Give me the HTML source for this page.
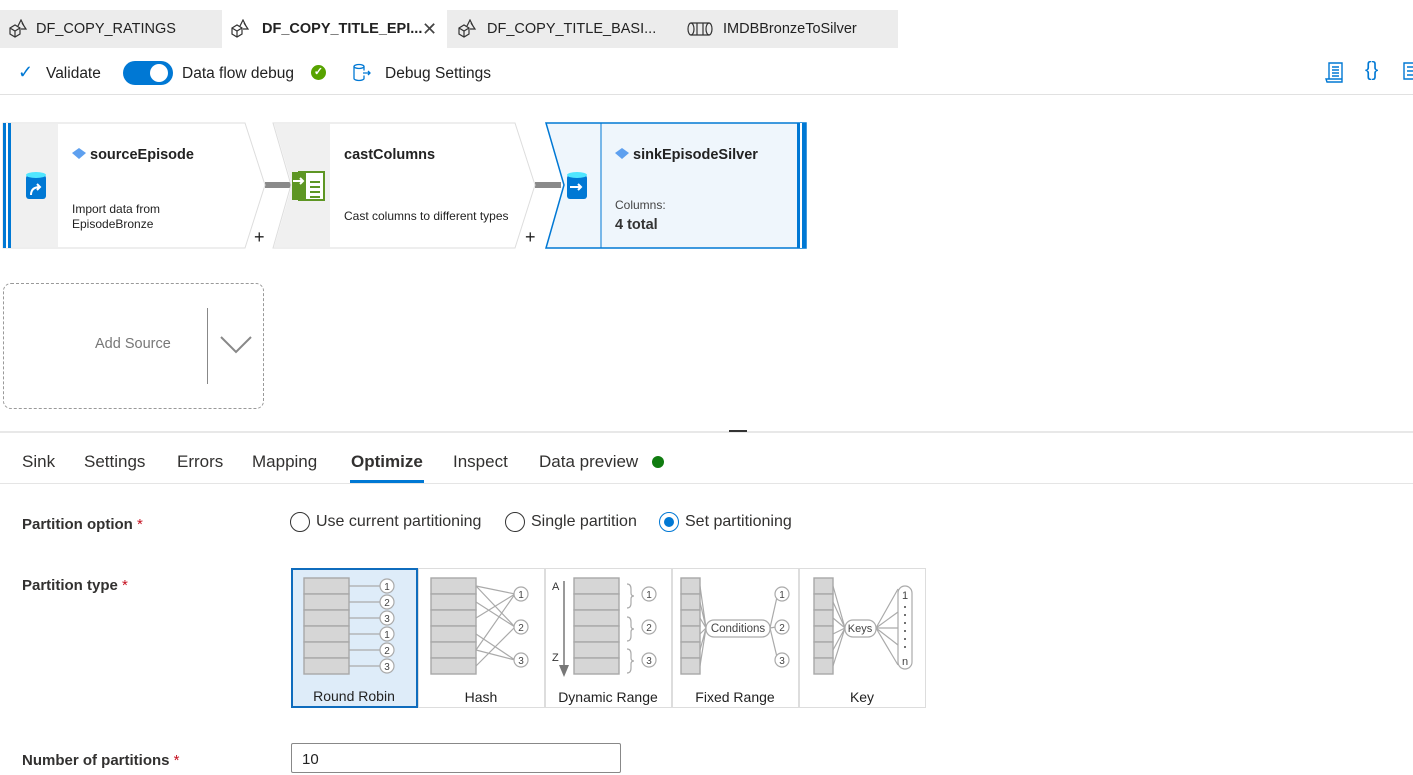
<!DOCTYPE html>
<html><head><meta charset="utf-8"><style>
*{box-sizing:border-box;margin:0;padding:0}
body{width:1413px;height:775px;overflow:hidden;background:#fff;font-family:"Liberation Sans",sans-serif;color:#222;position:relative}
.abs{position:absolute}
.tab{position:absolute;top:10px;height:38px;background:#ececec;font-size:14.5px;display:flex;align-items:center;color:#222}
.lbl{position:absolute;font-size:15px;font-weight:bold;color:#323130}
.req{color:#c50f1f;font-weight:normal}
.bt{position:absolute;top:452px;font-size:17px;color:#323130}
.radio{position:absolute;top:512px;font-size:16px;color:#323130;display:flex;align-items:center}
.rc{width:20px;height:20px;border:1px solid #333;border-radius:50%;margin-right:6px;display:inline-block}
</style></head><body>
<div class="abs" style="left:0;top:10px;width:1413px;height:38px;background:#fff"></div>
<div class="tab" style="left:0;width:222px;padding-left:8px"><svg width="22" height="20" viewBox="0 0 22 20" fill="none" stroke="#333" stroke-width="1.2"><path d="M2 9l5-3 5 3v6l-5 3-5-3z M2 9l5 3 5-3 M7 12v6 M10 7l3-6 3 6 M14 4l4 6h-5"/></svg><span style="margin-left:6px">DF_COPY_RATINGS</span></div>
<div class="tab" style="left:222px;width:225px;padding-left:8px;background:#fff;font-weight:bold"><svg width="22" height="20" viewBox="0 0 22 20" fill="none" stroke="#333" stroke-width="1.2"><path d="M2 9l5-3 5 3v6l-5 3-5-3z M2 9l5 3 5-3 M7 12v6 M10 7l3-6 3 6 M14 4l4 6h-5"/></svg><span style="margin-left:10px">DF_COPY_TITLE_EPI...</span><span style="position:absolute;left:200px;font-weight:normal;font-size:18px;color:#444">✕</span></div>
<div class="tab" style="left:447px;width:226px;padding-left:10px"><svg width="22" height="20" viewBox="0 0 22 20" fill="none" stroke="#333" stroke-width="1.2"><path d="M2 9l5-3 5 3v6l-5 3-5-3z M2 9l5 3 5-3 M7 12v6 M10 7l3-6 3 6 M14 4l4 6h-5"/></svg><span style="margin-left:8px">DF_COPY_TITLE_BASI...</span></div>
<div class="tab" style="left:673px;width:225px;padding-left:14px"><svg width="26" height="16" viewBox="0 0 26 16" fill="none" stroke="#333" stroke-width="1.2"><ellipse cx="4" cy="8" rx="3" ry="6"/><ellipse cx="22" cy="8" rx="3" ry="6"/><path d="M4 2h18M4 14h18M10 2v12M16 2v12"/></svg><span style="margin-left:10px">IMDBBronzeToSilver</span></div>
<div class="abs" style="left:0;top:94px;width:1413px;height:1px;background:#e1e1e1"></div>
<div class="abs" style="left:18px;top:62px;font-size:18px;color:#0078d4">✓</div>
<div class="abs" style="left:46px;top:65px;font-size:15.5px">Validate</div>
<div class="abs" style="left:123px;top:61px;width:50px;height:24px;border-radius:12px;background:#0078d4"><div style="position:absolute;right:5px;top:3px;width:18px;height:18px;border-radius:50%;background:#fff"></div></div>
<div class="abs" style="left:182px;top:65px;font-size:15.5px">Data flow debug</div>
<div class="abs" style="left:311px;top:65px;width:15px;height:15px;border-radius:50%;background:#57a300;color:#fff;font-size:11px;text-align:center;line-height:15px;font-weight:bold">✓</div>
<svg class="abs" style="left:352px;top:63px" width="22" height="20" viewBox="0 0 22 20" fill="none" stroke="#0078d4" stroke-width="1.3"><ellipse cx="7" cy="3.5" rx="5" ry="2"/><path d="M2 3.5v12c0 1 2.2 2 5 2s5-1 5-2v-3M12 3.5v4M11 10h7m-2-2l2 2-2 2"/></svg>
<div class="abs" style="left:385px;top:65px;font-size:15.5px">Debug Settings</div>
<svg class="abs" style="left:1325px;top:61px" width="20" height="22" viewBox="0 0 20 22" fill="none" stroke="#0078d4" stroke-width="1.4"><path d="M4 2h13v16H4zM1 18h16v3H2zM7 6h7M7 9h7M7 12h7M7 15h7"/></svg>
<div class="abs" style="left:1365px;top:59px;font-size:20px;color:#0078d4">{}</div>
<svg class="abs" style="left:1403px;top:62px" width="12" height="20" viewBox="0 0 12 20" fill="none" stroke="#0078d4" stroke-width="1.4"><path d="M1 1h12v16H1zM4 5h8M4 9h8M4 13h8"/></svg>

<svg class="abs" style="left:0;top:115px" width="820" height="140" viewBox="0 115 820 140">
<rect x="265" y="182" width="26" height="6" fill="#8a8a8a"/><rect x="535" y="182" width="26" height="6" fill="#8a8a8a"/>
<path d="M3 123H245L265 185L245 248H3Z" fill="#fff" stroke="#ddd"/>
<rect x="3" y="123" width="8" height="125" fill="#0078d4"/><rect x="6" y="123" width="2" height="125" fill="#fff"/>
<rect x="11" y="124" width="47" height="123" fill="#f0f0f0"/>
<path d="M273 123H515L535 185L515 248H273L291 185Z" fill="#fff" stroke="#ddd"/>
<path d="M274 124H330V247H274L292 185Z" fill="#f0f0f0"/>
<path d="M546 123H806V248H546L564 185Z" fill="#eff6fc" stroke="#0078d4" stroke-width="1.5"/>
<line x1="601" y1="123" x2="601" y2="248" stroke="#0078d4"/>
<rect x="797" y="123" width="9" height="125" fill="#0078d4"/><rect x="800" y="123" width="2" height="125" fill="#fff"/>
<g><rect x="26" y="175" width="20" height="24" rx="3" fill="#0078d4"/><ellipse cx="36" cy="175" rx="10" ry="3" fill="#50e6ff"/><path d="M31 195c0-6 4-8 9-8m-3-3l3 3-3 3" stroke="#fff" stroke-width="2" fill="none"/></g>
<g><rect x="567" y="175" width="20" height="24" rx="3" fill="#0078d4"/><ellipse cx="577" cy="175" rx="10" ry="3" fill="#50e6ff"/><path d="M570 187h11m-3-3l3 3-3 3" stroke="#fff" stroke-width="2" fill="none"/></g>
<g><rect x="299" y="172" width="25" height="28" fill="#fff" stroke="#5e9624" stroke-width="2"/><rect x="292" y="172" width="14" height="28" fill="#5e9624"/><path d="M293 181h10m-3-3l3 3-3 3" stroke="#fff" stroke-width="2" fill="none"/><path d="M310 182h10M310 187h10M310 192h10M310 197h10" stroke="#5e9624" stroke-width="2"/></g>
<path d="M72 153l7-5 7 5-7 6z" fill="#5ea0ef"/><path d="M615 153l7-5 7 5-7 6z" fill="#5ea0ef"/>
<g font-family="Liberation Sans,sans-serif" fill="#222">
<text x="90" y="159" font-size="14.5" font-weight="bold">sourceEpisode</text>
<text x="72" y="213" font-size="12">Import data from</text><text x="72" y="228" font-size="12">EpisodeBronze</text>
<text x="344" y="159" font-size="14.5" font-weight="bold">castColumns</text>
<text x="344" y="220" font-size="12">Cast columns to different types</text>
<text x="633" y="159" font-size="14.5" font-weight="bold">sinkEpisodeSilver</text>
<text x="615" y="209" font-size="12" fill="#444">Columns:</text>
<text x="615" y="229" font-size="14.5" font-weight="bold" fill="#333">4 total</text>
<text x="254" y="243" font-size="18">+</text><text x="525" y="243" font-size="18">+</text>
</g></svg>

<div class="abs" style="left:3px;top:283px;width:261px;height:126px;border:1px dashed #999;border-radius:8px"></div>
<div class="abs" style="left:95px;top:336px;font-size:14.5px;color:#777">Add Source</div>
<div class="abs" style="left:207px;top:308px;width:1px;height:76px;background:#888"></div>
<svg class="abs" style="left:220px;top:335px" width="33" height="20"><path d="M1 2l15 15 15-15" stroke="#888" stroke-width="2" fill="none"/></svg>

<div class="abs" style="left:0;top:431px;width:1413px;height:2px;background:#e8e8e8"></div>
<div class="abs" style="left:729px;top:430px;width:18px;height:2px;background:#333"></div>
<div class="bt" style="left:22px">Sink</div><div class="bt" style="left:84px">Settings</div><div class="bt" style="left:177px">Errors</div><div class="bt" style="left:252px">Mapping</div>
<div class="bt" style="left:351px;font-weight:bold">Optimize</div><div class="bt" style="left:453px">Inspect</div><div class="bt" style="left:539px">Data preview</div>
<div class="abs" style="left:652px;top:456px;width:12px;height:12px;border-radius:50%;background:#107c10"></div>
<div class="abs" style="left:350px;top:480px;width:74px;height:3px;background:#0078d4"></div>
<div class="abs" style="left:0;top:483px;width:1413px;height:1px;background:#e5e5e5"></div>

<div class="lbl" style="left:22px;top:516px">Partition option <span class="req">*</span></div>
<div class="lbl" style="left:22px;top:577px">Partition type <span class="req">*</span></div>
<div class="lbl" style="left:22px;top:752px">Number of partitions <span class="req">*</span></div>
<div class="radio" style="left:290px"><span class="rc"></span>Use current partitioning</div>
<div class="radio" style="left:505px"><span class="rc"></span>Single partition</div>
<div class="radio" style="left:659px"><span class="rc" style="border-color:#0078d4;position:relative"><span style="position:absolute;left:4px;top:4px;width:10px;height:10px;border-radius:50%;background:#0078d4"></span></span>Set partitioning</div>
<div class="abs" style="left:291px;top:743px;width:330px;height:30px;border:1px solid #888;border-radius:2px;font-size:15px;padding:7px 10px">10</div>

<svg class="abs" style="left:290px;top:567px" width="640" height="142" viewBox="0 0 640 142" font-family="Liberation Sans,sans-serif">
<g fill="none" stroke="#ddd"><rect x="128.5" y="1.5" width="126" height="139"/><rect x="255.5" y="1.5" width="126" height="139"/><rect x="382.5" y="1.5" width="126" height="139"/><rect x="509.5" y="1.5" width="126" height="139"/></g>
<rect x="2" y="2" width="125" height="138" fill="#deecf9" stroke="#0f6cbd" stroke-width="2"/>
<defs><g id="stack"><rect x="0" y="0" width="45" height="16" fill="#d6d6d6" stroke="#a8a8a8" stroke-width="1.4"/><rect x="0" y="16" width="45" height="16" fill="#d6d6d6" stroke="#a8a8a8" stroke-width="1.4"/><rect x="0" y="32" width="45" height="16" fill="#d6d6d6" stroke="#a8a8a8" stroke-width="1.4"/><rect x="0" y="48" width="45" height="16" fill="#d6d6d6" stroke="#a8a8a8" stroke-width="1.4"/><rect x="0" y="64" width="45" height="16" fill="#d6d6d6" stroke="#a8a8a8" stroke-width="1.4"/><rect x="0" y="80" width="45" height="16" fill="#d6d6d6" stroke="#a8a8a8" stroke-width="1.4"/></g>
<g id="nstack"><rect x="0" y="0" width="19" height="16" fill="#d6d6d6" stroke="#a8a8a8" stroke-width="1.4"/><rect x="0" y="16" width="19" height="16" fill="#d6d6d6" stroke="#a8a8a8" stroke-width="1.4"/><rect x="0" y="32" width="19" height="16" fill="#d6d6d6" stroke="#a8a8a8" stroke-width="1.4"/><rect x="0" y="48" width="19" height="16" fill="#d6d6d6" stroke="#a8a8a8" stroke-width="1.4"/><rect x="0" y="64" width="19" height="16" fill="#d6d6d6" stroke="#a8a8a8" stroke-width="1.4"/><rect x="0" y="80" width="19" height="16" fill="#d6d6d6" stroke="#a8a8a8" stroke-width="1.4"/></g></defs>
<g stroke="#aaa" stroke-width="1.2" fill="none">
<path d="M59 19H91M59 35H91M59 51H91M59 67H91M59 83H91M59 99H91"/>
<path d="M186 19L225 27M186 35L225 60M186 51L225 27M186 67L225 93M186 83L225 27M186 99L225 60M186 19L225 60M186 83L225 93"/>
<path d="M410 19L416 61M410 35L416 61M410 51L416 61M410 67L416 61M410 83L416 61M410 99L416 61M480 61L487 30M480 61L486 60M480 61L487 90"/>
<path d="M543 19L555 61M543 35L555 61M543 51L555 61M543 67L555 61M543 83L555 61M543 99L555 61M586 61L608 22M586 61L608 45M586 61L608 61M586 61L608 78M586 61L608 98"/>
<path d="M337 17q4 0 4 5v4q0 3 3 3q-3 0-3 3v4q0 5-4 5M337 50q4 0 4 5v4q0 3 3 3q-3 0-3 3v4q0 5-4 5M337 82q4 0 4 5v4q0 3 3 3q-3 0-3 3v4q0 5-4 5"/>
</g>
<use href="#stack" x="14" y="11"/><use href="#stack" x="141" y="11"/><use href="#stack" x="284" y="11"/><use href="#nstack" x="391" y="11"/><use href="#nstack" x="524" y="11"/>
<line x1="274" y1="14" x2="274" y2="100" stroke="#777" stroke-width="1.5"/><path d="M269 98h10l-5 12z" fill="#777"/>
<text x="262" y="23" font-size="11" fill="#333">A</text><text x="262" y="94" font-size="11" fill="#333">Z</text>
<g fill="#fff" stroke="#aaa" stroke-width="1.2">
<circle cx="97" cy="19" r="7"/><circle cx="97" cy="35" r="7"/><circle cx="97" cy="51" r="7"/><circle cx="97" cy="67" r="7"/><circle cx="97" cy="83" r="7"/><circle cx="97" cy="99" r="7"/>
<circle cx="231" cy="27" r="7"/><circle cx="231" cy="60" r="7"/><circle cx="231" cy="93" r="7"/>
<circle cx="359" cy="27" r="7"/><circle cx="359" cy="60" r="7"/><circle cx="359" cy="93" r="7"/>
<circle cx="492" cy="27" r="7"/><circle cx="492" cy="60" r="7"/><circle cx="492" cy="93" r="7"/>
<rect x="416" y="53" width="64" height="17" rx="8"/><rect x="555" y="53" width="31" height="17" rx="8"/><rect x="608" y="19" width="14" height="83" rx="7"/>
</g>
<g font-size="10" fill="#444" text-anchor="middle">
<text x="97" y="23">1</text><text x="97" y="39">2</text><text x="97" y="55">3</text><text x="97" y="71">1</text><text x="97" y="87">2</text><text x="97" y="103">3</text>
<text x="231" y="31">1</text><text x="231" y="64">2</text><text x="231" y="97">3</text>
<text x="359" y="31">1</text><text x="359" y="64">2</text><text x="359" y="97">3</text>
<text x="492" y="31">1</text><text x="492" y="64">2</text><text x="492" y="97">3</text>
<text x="448" y="65" font-size="11.5">Conditions</text><text x="570" y="65" font-size="11">Keys</text>
<text x="615" y="32" font-size="11">1</text><text x="615" y="98" font-size="11">n</text>
</g>
<g fill="#444"><circle cx="615" cy="40" r="1"/><circle cx="615" cy="48" r="1"/><circle cx="615" cy="56" r="1"/><circle cx="615" cy="64" r="1"/><circle cx="615" cy="72" r="1"/><circle cx="615" cy="80" r="1"/></g>
<g font-size="14" fill="#222" text-anchor="middle">
<text x="64" y="134">Round Robin</text><text x="191" y="135">Hash</text><text x="318" y="135">Dynamic Range</text><text x="445" y="135">Fixed Range</text><text x="572" y="135">Key</text>
</g></svg>
</body></html>
